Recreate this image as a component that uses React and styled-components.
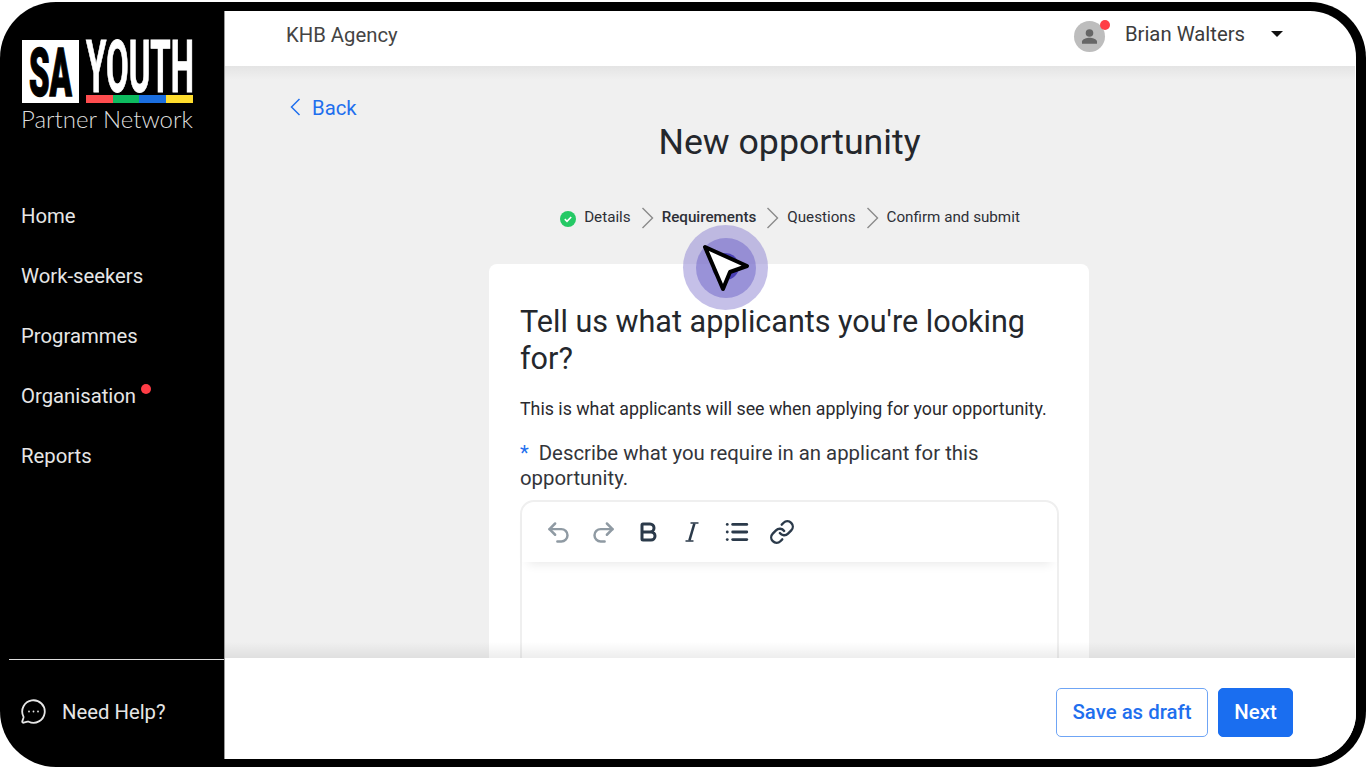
import React from "react";
import styled, { createGlobalStyle } from "styled-components";
import { Undo2, Redo2, Bold, List, Link, MessageCircleMore } from "lucide-react";

const Global = createGlobalStyle`
  html, body { margin: 0; padding: 0; background: #fff; overflow: hidden; }
  body { font-family: Roboto, "Liberation Sans", sans-serif; }
  * { box-sizing: border-box; }
`;
const Page = styled.div`
  width: 1366px; height: 768px; padding: 2px 0 1px 0; background: #fff;
`;
const Frame = styled.div`
  position: relative; width: 100%; height: 100%; background: #000; border-radius: 56px;
  padding: 9px 10px 8px 0; display: flex; overflow: hidden;
`;
const Sidebar = styled.aside`
  width: 224px; flex: none; display: flex; flex-direction: column; color: #eee;
`;
const LogoWrap = styled.div`
  padding: 17px 0 0 21px; height: 175px; flex: none;
`;
const PartnerText = styled.div`
  font: 300 24px Lato, Roboto, sans-serif; color: #ddd; margin-top: -14px; white-space: nowrap;
`;
const Nav = styled.nav`
  display: flex; flex-direction: column; flex: 1;
`;
const NavItem = styled.a`
  height: 60px; display: flex; align-items: center; padding-left: 21px;
  font-size: 20.3px; color: #e6e6e6; position: relative; width: max-content;
`;
const NavDot = styled.span`
  width: 10px; height: 10px; border-radius: 50%; background: #ff3d46;
  margin: -14px 0 0 5px;
`;
const Help = styled.div`
  margin-left: 9px; margin-right: -1px; height: 100px; border-top: 1px solid #ddd; display: flex; align-items: center;
  padding: 4px 0 0 11px; gap: 15px; font-size: 20.3px; color: #e6e6e6;
`;
const Main = styled.main`
  flex: 1; min-width: 0; background: #fff; border-radius: 0 46px 46px 0; overflow: hidden;
  display: flex; flex-direction: column; border-left: 1px solid #999; position: relative;
`;
const Header = styled.header`
  height: 55px; flex: none; display: flex; align-items: center; padding: 0 73px 8px 61px;
  justify-content: space-between; font-size: 20.3px; color: #444; position: relative; z-index: 2;
`;
const User = styled.div`
  display: flex; align-items: center; color: #3c3c3c;
`;
const UserName = styled.span`
  margin-top: -2px;
`;
const AvatarBox = styled.div`
  width: 31px; height: 31px; border-radius: 50%; background: #bdbdbd; position: relative;
  display: flex; align-items: center; justify-content: center; margin: 3px 20px 0 0;
`;
const Badge = styled.span`
  position: absolute; top: -1px; right: -5px; width: 10px; height: 10px; border-radius: 50%; background: #ff3d46;
`;
const Caret = styled.span`
  margin-left: 26px; width: 0; height: 0; border-left: 6.5px solid transparent; border-right: 6.5px solid transparent;
  border-top: 6px solid #111; margin-top: -2px;
`;
const Content = styled.section`
  flex: 1; min-height: 0; background: #f0f0f0; overflow: hidden; margin-right: 1px;
  display: flex; flex-direction: column; position: relative;
  &::before { content: ""; position: absolute; inset: 0 0 auto 0; height: 14px;
    background: linear-gradient(#e4e4e4, #f0f0f0); }
  &::after { content: ""; position: absolute; inset: auto 0 0 0; height: 16px;
    background: linear-gradient(rgba(0,0,0,0), rgba(0,0,0,.07)); }
`;
const Back = styled.a`
  align-self: flex-start; margin: 30px 0 0 65px; display: flex; align-items: center; gap: 11px;
  color: #1f6fee; font-size: 20.3px; height: 26px; position: relative; z-index: 1;
`;
const Title = styled.h1`
  margin: 1px 0 0; padding-right: 1px; text-align: center; font-weight: 400; font-size: 35.7px; line-height: 42px; color: #24272c;
`;
const Steps = styled.div`
  display: flex; justify-content: center; align-items: center; margin-top: 42px; height: 26px;
  font-size: 15.2px; color: #2d2f36;
`;
const Step = styled.span`
  font-weight: ${p => (p.$active ? 500 : 400)};
`;
const Sep = styled.svg`
  width: 13px; height: 22px; margin: 2px 8px 0 10px; flex: none;
`;
const Card = styled.div`
  width: 600px; flex: none; margin: 35px 0 0 264px; background: #fff; border-radius: 8px 8px 0 0;
  padding: 39px 31px 0; height: 480px;
`;
const CardTitle = styled.h2`
  margin: 0; font-weight: 400; font-size: 30.55px; line-height: 37px; color: #24272c;
`;
const Lead = styled.p`
  margin: 20px 0 0; font-size: 17.8px; line-height: 24px; color: #2a2a2e;
`;
const Label = styled.div`
  margin: 20px 0 0; font-size: 20.35px; line-height: 24.6px; color: #33353a;
`;
const Star = styled.span`
  color: #1f6fee; margin-right: 10px;
`;
const Editor = styled.div`
  margin-top: 10px; width: 539px; height: 300px; border: 2px solid #efefef; border-radius: 14px 14px 0 0;
`;
const Toolbar = styled.div`
  height: 60px; display: flex; align-items: center; padding-left: 14px;
  box-shadow: 0 8px 10px -6px rgba(0,0,0,.09);
`;
const ToolBtn = styled.span`
  display: flex; width: 45px; justify-content: center; margin-right: -0.4px;
  color: ${p => (p.$muted ? "#8f9aa3" : "#2b3a4a")};
`;
const Footer = styled.footer`
  height: 101px; flex: none; display: flex; justify-content: flex-end; align-items: center; gap: 10px;
  padding: 7px 63px 0 0; background: #fff; position: relative; z-index: 2;
`;
const Btn = styled.button`
  height: 49px; border-radius: 5px; font: 500 20.4px Roboto, sans-serif; padding: 0;
  width: ${p => p.$w}px;
  background: ${p => (p.$primary ? "#1a6ef0" : "#fff")};
  color: ${p => (p.$primary ? "#fff" : "#1f6fee")};
  border: 1.5px solid ${p => (p.$primary ? "#1a6ef0" : "#6fa5f5")};
`;
const Cursor = styled.div`
  position: absolute; left: 683px; top: 223px; width: 85px; height: 85px; border-radius: 50%;
  background: rgba(140,130,210,.5); display: flex; align-items: center; justify-content: center; z-index: 5;
`;
const CursorInner = styled.div`
  width: 60px; height: 60px; border-radius: 50%; background: rgba(110,100,200,.5);
  display: flex; align-items: center; justify-content: center;
`;
const CursorCore = styled.div`
  width: 27px; height: 27px; border-radius: 50%; background: #4a40b5; margin-top: -2px;
`;
const CursorArrow = styled.svg`
  position: absolute; left: 19px; top: 19px; width: 48px; height: 48px;
`;

const Logo = () => (
  <svg width="175" height="90" viewBox="0 0 175 90" style={{ display: "block", overflow: "visible" }}>
    <rect x="1" y="12" width="57" height="63" fill="#fff" />
    <text transform="translate(8,67.5) scale(1,1.65)" fontFamily="Roboto" fontWeight="900" fontSize="40" fill="#000" stroke="#000" strokeWidth="0.8" textLength="43" lengthAdjust="spacingAndGlyphs">SA</text>
    <text transform="translate(65,64) scale(1,1.66)" fontFamily="Roboto" fontWeight="700" fontSize="44" fill="#fff" stroke="#fff" strokeWidth="0.6" textLength="108" lengthAdjust="spacingAndGlyphs">YOUTH</text>
    <rect x="65" y="67" width="27" height="8" fill="#ff4d4f" />
    <rect x="92" y="67" width="26" height="8" fill="#0dbb5f" />
    <rect x="118" y="67" width="27" height="8" fill="#1b6fe0" />
    <rect x="145" y="67" width="27" height="8" fill="#ffdd2d" />
  </svg>
);
const Chevron = () => (
  <Sep viewBox="0 0 13 22"><path d="M1.5 1 L11.5 11 L1.5 21" fill="none" stroke="#8a8a8a" strokeWidth="1.4" /></Sep>
);
const BackChevron = () => (
  <svg width="11" height="18" viewBox="0 0 11 18" fill="none" stroke="#1f6fee" strokeWidth="1.5" style={{ marginTop: -2 }}>
    <path d="M9.5 1 L1.5 9 L9.5 17" />
  </svg>
);
const Check = () => (
  <svg width="16" height="16" viewBox="0 0 16 16" style={{ marginRight: 8, marginTop: 3 }}>
    <circle cx="8" cy="8" r="8" fill="#25c965" />
    <path d="M4.8 8.2 L7 10.3 L11.2 6" fill="none" stroke="#fff" strokeWidth="1.6" />
  </svg>
);
const SerifItalic = () => (
  <svg width="24" height="24" viewBox="0 0 24 24" fill="none" stroke="currentColor" strokeLinecap="round">
    <path d="M14.4 3.5 L9.4 20.5" strokeWidth="2.6" strokeLinecap="butt" />
    <path d="M11 3 H18 M6 21 H13" strokeWidth="1.4" />
  </svg>
);

export default function App() {
  return (
    <Page>
      <Global />
      <Frame>
        <Sidebar>
          <LogoWrap>
            <Logo />
            <PartnerText>Partner Network</PartnerText>
          </LogoWrap>
          <Nav>
            <NavItem>Home</NavItem>
            <NavItem>Work-seekers</NavItem>
            <NavItem>Programmes</NavItem>
            <NavItem>Organisation<NavDot /></NavItem>
            <NavItem>Reports</NavItem>
          </Nav>
          <Help><MessageCircleMore size={27} strokeWidth={1.6} />Need Help?</Help>
        </Sidebar>
        <Main>
          <Header>
            <span>KHB Agency</span>
            <User>
              <AvatarBox>
                <svg width="19" height="19" viewBox="0 0 24 24" fill="#666"><circle cx="12" cy="7.5" r="4.8" /><path d="M2.5 21v-2.5c0-3.5 6.3-5 9.5-5s9.5 1.5 9.5 5V21z" /></svg>
                <Badge />
              </AvatarBox>
              <UserName>Brian Walters</UserName>
              <Caret />
            </User>
          </Header>
          <Content>
            <Back><BackChevron />Back</Back>
            <Title>New opportunity</Title>
            <Steps>
              <Check /><Step>Details</Step><Chevron />
              <Step $active>Requirements</Step><Chevron />
              <Step>Questions</Step><Chevron />
              <Step>Confirm and submit</Step>
            </Steps>
            <Card>
              <CardTitle>Tell us what applicants you're looking for?</CardTitle>
              <Lead>This is what applicants will see when applying for your opportunity.</Lead>
              <Label><Star>*</Star>Describe what you require in an applicant for this opportunity.</Label>
              <Editor>
                <Toolbar>
                  <ToolBtn $muted><Undo2 size={27} strokeWidth={2.2} /></ToolBtn>
                  <ToolBtn $muted><Redo2 size={27} strokeWidth={2.2} /></ToolBtn>
                  <ToolBtn><Bold size={24} strokeWidth={3} /></ToolBtn>
                  <ToolBtn><SerifItalic /></ToolBtn>
                  <ToolBtn><List size={26} strokeWidth={2.6} /></ToolBtn>
                  <ToolBtn><Link size={26} strokeWidth={2.2} /></ToolBtn>
                </Toolbar>
              </Editor>
            </Card>
          </Content>
          <Footer>
            <Btn $w={152}>Save as draft</Btn>
            <Btn $primary $w={75}>Next</Btn>
          </Footer>
        </Main>
        <Cursor>
          <CursorInner><CursorCore /></CursorInner>
          <CursorArrow viewBox="0 0 48 48">
            <path d="M3 3 L45 22 L28 28 L21 45 Z" fill="#fff" stroke="#000" strokeWidth="4" strokeLinejoin="round" />
          </CursorArrow>
        </Cursor>
      </Frame>
    </Page>
  );
}
